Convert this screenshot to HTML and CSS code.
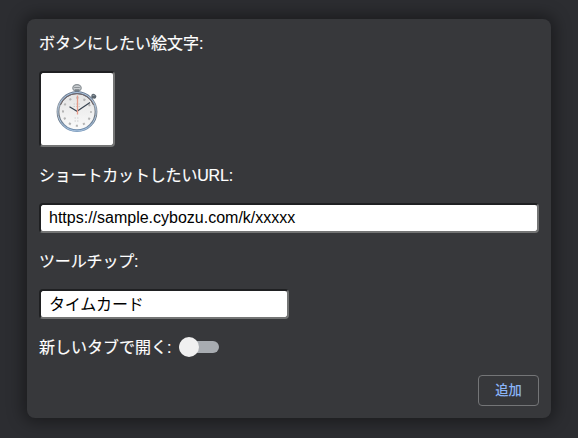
FILE: index.html
```
<!DOCTYPE html>
<html lang="ja">
<head>
<meta charset="utf-8">
<title>ショートカット</title>
<link rel="stylesheet" href="styles.css">
</head>
<body>
<form class="card">
  <label class="label">ボタンにしたい絵文字:</label>
  <div class="field emoji">
    <svg class="watch" viewBox="0 0 48 56" width="48" height="56">
      <defs>
        <linearGradient id="rim" x1="0" y1="0" x2="0" y2="1">
          <stop offset="0" stop-color="#65768d"/>
          <stop offset=".35" stop-color="#8e959e"/>
          <stop offset=".6" stop-color="#70767d"/>
          <stop offset="1" stop-color="#6f8fb2"/>
        </linearGradient>
        <linearGradient id="face" x1="0" y1="0" x2="0" y2="1">
          <stop offset="0" stop-color="#e3e3e3"/>
          <stop offset="1" stop-color="#fbfbfb"/>
        </linearGradient>
      </defs>
      <ellipse cx="23" cy="8" rx="4.2" ry="3.4" fill="#c9cdd0" stroke="#899095" stroke-width="1.2"/>
      <path d="M20.200 7.500h5.600M20.700 9.500h4.800" stroke="#7c8388" stroke-width=".8"/>
      <path d="M20.700 10h4.600v3h-4.600z" fill="#788087"/>
      <path d="M36.500 19.500l2.500-2.500" stroke="#737c84" stroke-width="2"/>
      <ellipse cx="39.800" cy="16.300" rx="2.700" ry="2.200" fill="#59636c" transform="rotate(35 39.800 16.300)"/>
      <path d="M38.500 15.200l2 .4" stroke="#aab7c2" stroke-width=".8"/>
      <circle cx="23" cy="31.700" r="19" fill="url(#face)" stroke="url(#rim)" stroke-width="2.800"/>
      <circle cx="23" cy="31.700" r="19.200" fill="none" stroke="#b4cde6" stroke-width=".9"/>
      <path d="M6.500 25a17.700 17.700 0 0 1 33 0" fill="none" stroke="#6c6062" stroke-width="1"/>
      <circle cx="23" cy="31.700" r="14" fill="none" stroke="#b4b4b4" stroke-width="2" stroke-dasharray="2.200 5.130" stroke-dashoffset="1.100"/>
      <path d="M19.500 24h7M19.500 26.500h7M20.500 38h5M20.500 41h5" stroke="#cecece" stroke-width="1" stroke-dasharray="1.500 1"/>
      <path d="M15.500 26.800L23 31.300 36 22.500" fill="none" stroke="#394451" stroke-width="1.200"/>
      <path d="M23.500 15.500v19" stroke="#e69b89" stroke-width="1.300"/>
    </svg>
  </div>
  <label class="label label-url" for="url">ショートカットしたいURL:</label>
  <input class="field url" id="url" type="text" value="https://sample.cybozu.com/k/xxxxx">
  <label class="label label-tip" for="tip">ツールチップ:</label>
  <input class="field tip" id="tip" type="text" value="タイムカード">
  <div class="switch-row">
    <span class="switch-label">新しいタブで開く:</span>
    <span class="switch"><span class="knob"></span></span>
  </div>
  <button class="add" type="button">追加</button>
</form>
</body>
</html>
```
FILE: styles.css
```
* { box-sizing: border-box; }
body {
  margin: 0;
  height: 438px;
  overflow: hidden;
  padding: 19px 27px 20px;
  background: #2c2d31;
  color: #fff;
  font: 16px/24px "Liberation Sans", "Noto Sans CJK JP", sans-serif;
}
.card {
  display: flex;
  flex-direction: column;
  align-items: flex-start;
  height: 399px;
  padding: 12px;
  border-radius: 8px;
  background: #37383b;
  box-shadow: 0 0 16px 4px rgba(0, 0, 0, .4);
}
.label {
  height: 24px;
  margin-bottom: 16px;
  padding-top: 1px;
  white-space: nowrap;
}
.label, .switch-label { -webkit-text-stroke: .15px #fff; }
.label-url { letter-spacing: -.18px; }
.label-tip { letter-spacing: -.15px; }
.field {
  margin: 0 0 16px;
  border: 2px solid;
  border-color: #1f2022 #747575 #747575 #1f2022;
  border-radius: 4px;
  background: #fff;
  color: #000;
  font: inherit;
}
.emoji {
  display: flex;
  align-items: center;
  justify-content: center;
  width: 76px;
  height: 76px;
}
.watch { display: block; margin: -2px 0 0 2px; }
.url, .tip { height: 30px; padding: 0 8px; }
.url { width: 500px; }
.tip { width: 250px; padding-bottom: 2px; letter-spacing: -.2px; }
.switch-row { display: flex; align-items: center; gap: 8px; height: 24px; margin-bottom: 16px; }
.switch-label { padding-top: 1px; }
.switch {
  display: flex;
  align-items: center;
  width: 40px;
  height: 12px;
  border-radius: 6px;
  background: #a8acb1;
}
.knob { width: 20px; height: 20px; flex: none; border-radius: 50%; background: #f0f0f0; }
.add {
  align-self: flex-end;
  width: 61px;
  height: 31px;
  padding: 0;
  border: 1px solid #747577;
  border-radius: 4px;
  background: transparent;
  color: #8ab4f8;
  font: 500 13.3px/20px "Liberation Sans", "Noto Sans CJK JP", sans-serif;
}
```
